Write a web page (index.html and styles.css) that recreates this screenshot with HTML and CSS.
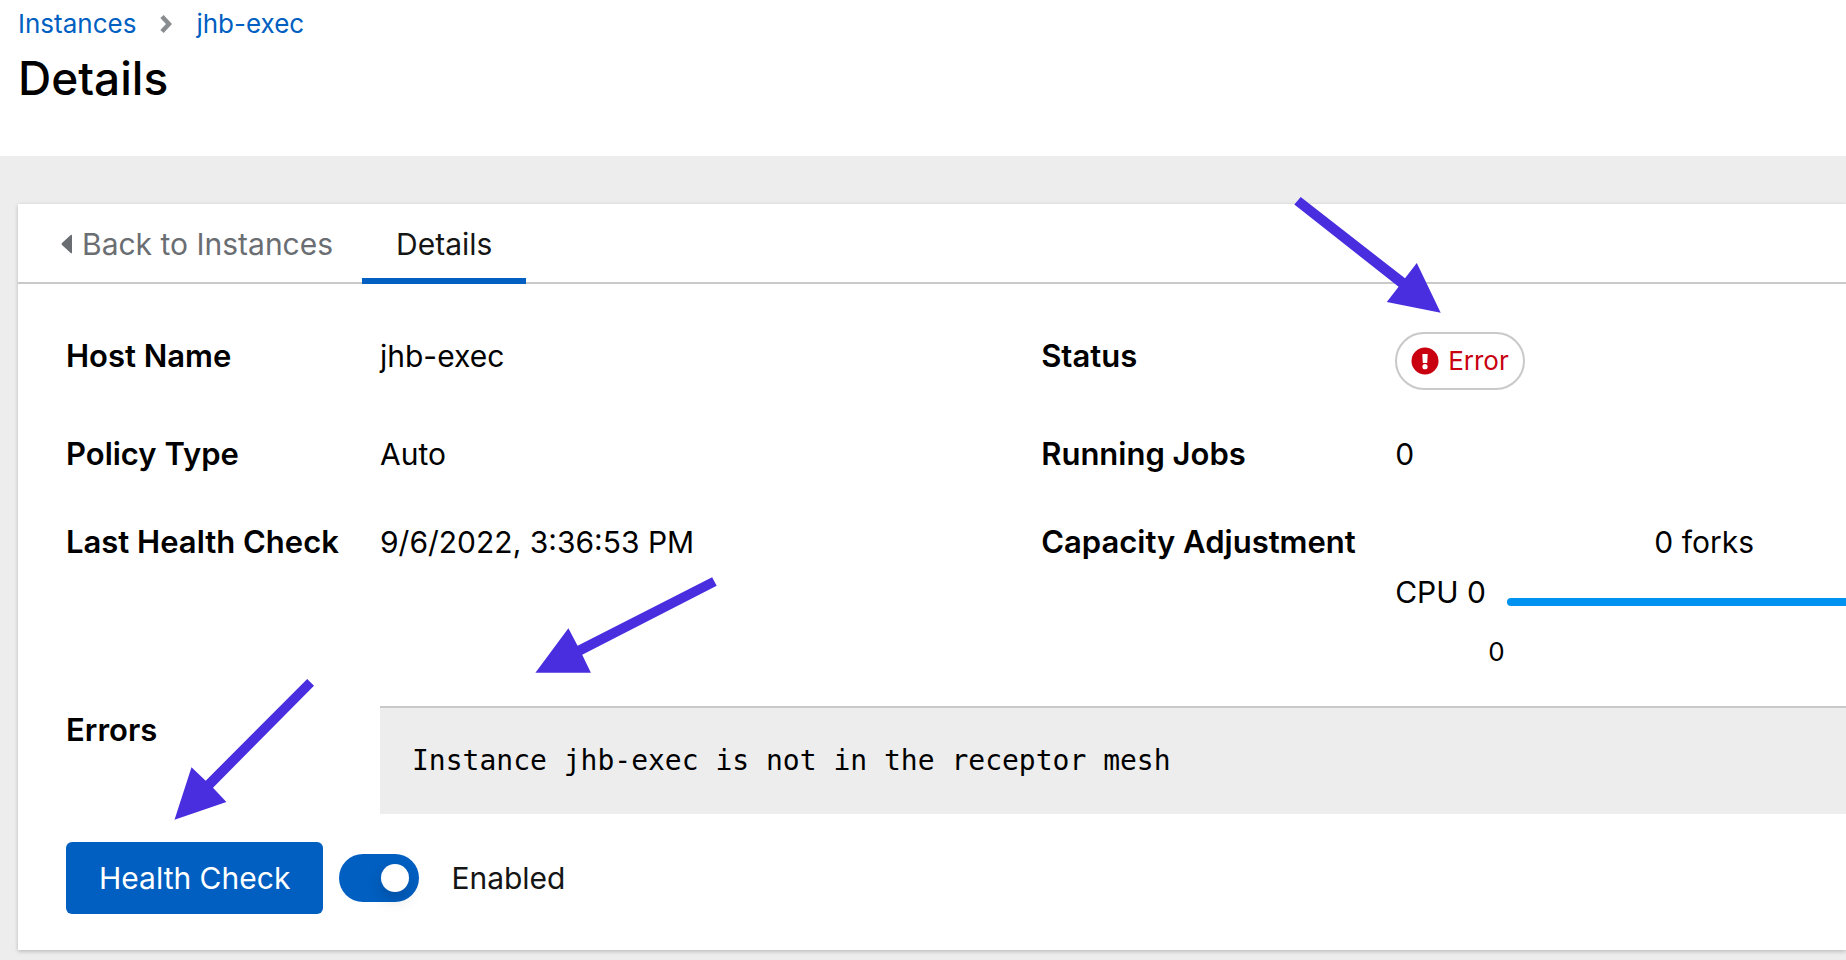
FILE: index.html
```html
<!DOCTYPE html>
<html lang="en">
<head>
<meta charset="utf-8">
<title>Instance details</title>
<link rel="stylesheet" href="styles.css">
</head>
<body>
<header class="page-header">
  <nav class="breadcrumb" aria-label="Breadcrumb">
    <a href="#instances">Instances</a>
    <svg class="chevron" viewBox="0 0 12 20" aria-hidden="true"><path d="M2 2.5 9 10 2 17.5" fill="none" stroke="#8a8d90" stroke-width="4.500"/></svg>
    <a href="#jhb-exec">jhb-exec</a>
  </nav>
  <h1 class="title">Details</h1>
</header>
<main class="card">
  <nav class="tabs" aria-label="Instance">
    <a class="tab tab-back" href="#instances"><svg class="caret" viewBox="0 0 12 20" aria-hidden="true"><path d="M12 1.500v17q0 1.400-1.300.5L2 11q-1-1 0-2L10.700 1Q12 .1 12 1.500z" fill="#6a6e73"/></svg>Back to Instances</a>
    <a class="tab tab-active" href="#details" aria-current="page">Details</a>
  </nav>
  <dl class="details">
    <dt>Host Name</dt><dd>jhb-exec</dd>
    <dt>Status</dt>
    <dd><span class="status"><svg class="status-icon" viewBox="0 0 28 28" aria-hidden="true"><circle cx="14" cy="14" r="13.500" fill="#c9000f"/><path d="M11.300 7h5.400l-.5 9h-4.400z" fill="#fff"/><circle cx="14" cy="19.700" r="2.600" fill="#fff"/></svg>Error</span></dd>
    <dt>Policy Type</dt><dd>Auto</dd>
    <dt>Running Jobs</dt><dd>0</dd>
    <dt>Last Health Check</dt><dd>9/6/2022, 3:36:53 PM</dd>
    <dt>Capacity Adjustment</dt>
    <dd class="capacity">
      <div class="forks">0 forks</div>
      <div class="capacity-row">
        <label for="cpu">CPU 0</label>
        <input class="slider" id="cpu" type="range" min="0" max="1" value="1">
      </div>
      <div class="tick">0</div>
    </dd>
    <dt>Errors</dt>
    <dd class="wide"><pre class="error-log">Instance jhb-exec is not in the receptor mesh</pre></dd>
  </dl>
  <div class="actions">
    <button class="button" type="button">Health Check</button>
    <label class="switch"><input class="switch-input" type="checkbox" role="switch" checked>Enabled</label>
  </div>
</main>
<svg class="arrows" width="1846" height="960" viewBox="0 0 1846 960" aria-hidden="true">
  <path d="M1300.700 197 1405 278.300 1416.800 263 1440.700 312.700 1386.800 302 1398.600 286.700 1294.300 204.600z"/>
  <path d="M712.100 577.300 577.600 645.700 568.400 628.300 535.400 672.700H590.900L582.200 654.700 716.700 585.700z"/>
  <path d="M307.200 679 205.700 780.700 191.500 767.300 174.500 819.700 226.400 802 213 787.700 314 685.700z"/>
</svg>
</body>
</html>
```
FILE: styles.css
```css
* {
  box-sizing: border-box;
}

body {
  margin: 0;
  min-height: 100vh;
  position: relative;
  overflow-x: hidden;
  background: #ededed;
  color: #000;
  font: 400 30px/48px Inter, sans-serif;
}

a {
  color: #005fc1;
  text-decoration: none;
}

.page-header {
  padding: 4px 18px 48px;
  background: #fff;
}

.breadcrumb {
  display: flex;
  align-items: center;
  gap: 24px;
  font-size: 26px;
  line-height: 40px;
}

.chevron {
  width: 12px;
  height: 20px;
}

.title {
  margin: 4px 0 0;
  font-size: 46px;
  font-weight: 500;
  line-height: 60px;
}

.card {
  margin: 48px 0 0 18px;
  padding-bottom: 36px;
  background: #fff;
  box-shadow: 0 2px 4px rgba(0, 0, 0, 0.16), 0 0 4px rgba(0, 0, 0, 0.08);
}

.tabs {
  display: flex;
  height: 80px;
  box-shadow: inset 0 -2px #c9c9c9;
}

.tab {
  display: flex;
  align-items: center;
  padding: 0 34px;
  color: #151515;
}

.tab-back {
  gap: 10px;
  padding: 0 29px 0 42px;
  color: #6a6e73;
}

.tab-active {
  box-shadow: inset 0 -6px #005fc1;
}

.caret {
  width: 12px;
  height: 20px;
}

.details {
  display: grid;
  grid-template-columns: 314px 22fr 354px 15fr;
  row-gap: 40px;
  margin: 0;
  padding: 48px 0 28px 48px;
}

.details dt {
  font-size: 31px;
  font-weight: 600;
}

.details dd {
  margin: 0;
  min-width: 0;
}

.details .wide {
  grid-column: 2 / -1;
}

.status {
  display: inline-flex;
  align-items: center;
  gap: 9px;
  height: 58px;
  padding: 0 14px;
  border: 2px solid #c9c9c9;
  border-radius: 29px;
  color: #c9000f;
  font-size: 26px;
  vertical-align: top;
}

.status-icon {
  width: 28px;
  height: 28px;
}

.forks {
  padding-right: 92px;
  text-align: right;
}

.capacity-row {
  display: flex;
  align-items: flex-end;
  gap: 21px;
  margin-top: 2px;
}

.capacity-row label {
  flex: none;
}

.slider {
  flex: 1;
  min-width: 0;
  height: 8px;
  margin: 0 0 10px;
  appearance: none;
  border-radius: 4px 0 0 4px;
  background: #0092f0;
}

.slider::-webkit-slider-thumb {
  appearance: none;
  width: 1px;
  height: 8px;
  background: #0092f0;
}

.tick {
  margin-top: 22px;
  padding-left: 93px;
  font-size: 26px;
  line-height: 28px;
}

.error-log {
  margin: 0;
  padding: 32px;
  border-top: 2px solid #c9c9c9;
  background: #ededed;
  font: 28px/42px "DejaVu Sans Mono", monospace;
}

.actions {
  display: flex;
  align-items: center;
  gap: 16px;
  padding-left: 48px;
}

.button {
  height: 72px;
  padding: 0 33px;
  border: 0;
  border-radius: 6px;
  background: #005fc1;
  color: #fff;
  font: inherit;
}

.switch {
  display: flex;
  align-items: center;
  gap: 32px;
  color: #151515;
}

.switch-input {
  display: flex;
  align-items: center;
  justify-content: flex-end;
  width: 80px;
  height: 48px;
  margin: 0;
  padding: 10px;
  appearance: none;
  border-radius: 24px;
  background: #005fc1;
}

.switch-input::before {
  content: "";
  width: 28px;
  height: 28px;
  border-radius: 50%;
  background: #fff;
  box-shadow: 0 8px 16px rgba(0, 0, 0, 0.16);
}

.arrows {
  position: absolute;
  top: 0;
  left: 0;
  fill: #492ee0;
  pointer-events: none;
}
```
